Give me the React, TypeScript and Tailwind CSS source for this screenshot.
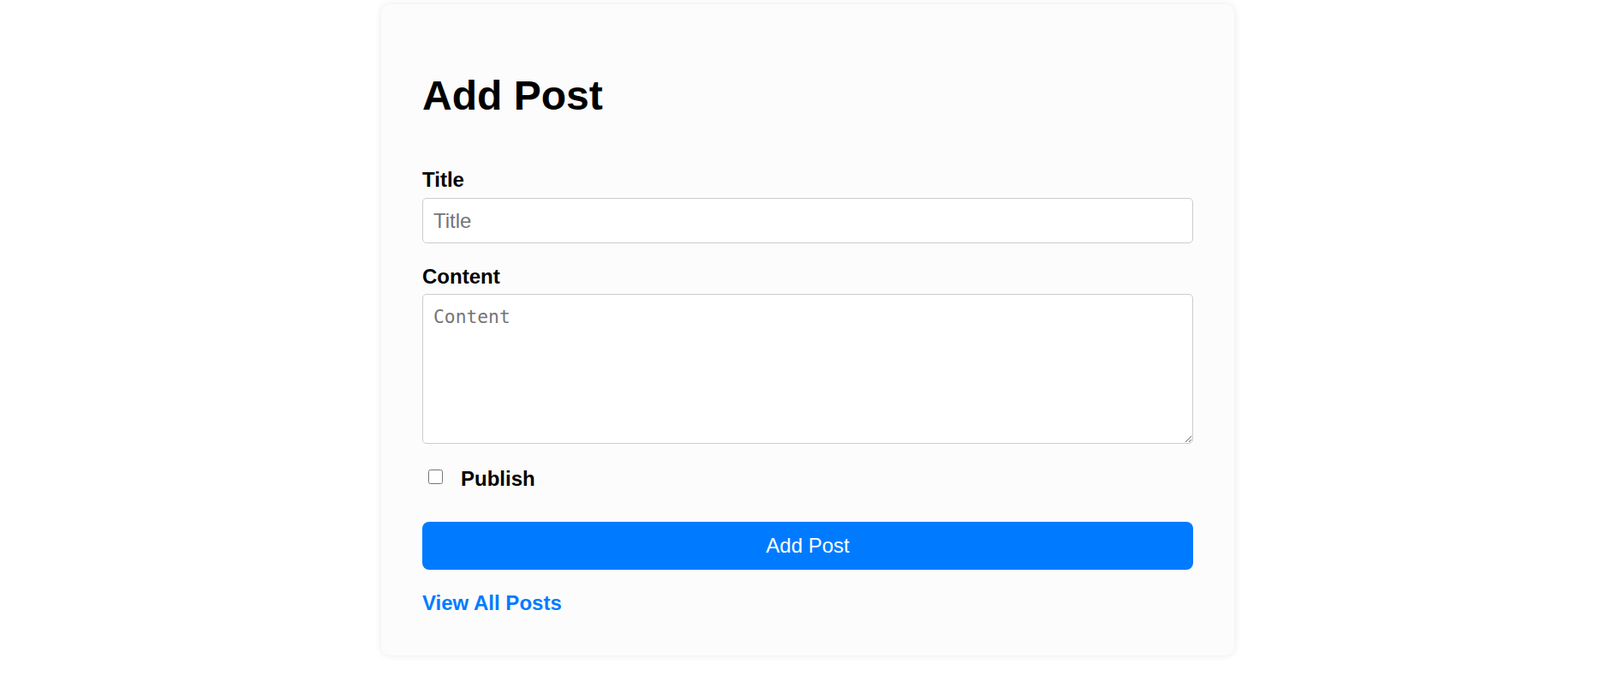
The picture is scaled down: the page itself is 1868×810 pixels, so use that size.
import { useState } from 'react';

const App = () => {
  const [title, setTitle] = useState('');
  const [content, setContent] = useState('');
  const [published, setPublished] = useState(false);

  return (
    <div className="min-h-screen bg-white flex justify-center pl-[18px] pt-[5px] font-['Liberation_Sans',Arial,sans-serif] text-black">
      <div className="w-[996px] self-start rounded-[10px] bg-[#fcfcfc] shadow-[0_0_8px_rgba(0,0,0,0.09)] px-12 pt-[79px] pb-[48px]">
        <h1 className="text-[48px] leading-[56px] font-bold mb-[57px]">Add Post</h1>

        <form onSubmit={(e) => e.preventDefault()}>
          <label htmlFor="title" className="block text-[24px] leading-[26px] font-bold mb-[8px]">
            Title
          </label>
          <input
            id="title"
            type="text"
            placeholder="Title"
            value={title}
            onChange={(e) => setTitle(e.target.value)}
            className="block w-full h-[53px] px-[12px] bg-white border border-[#cccccc] rounded-[5px] text-[24px] placeholder:text-[#757575] outline-none"
          />

          <label htmlFor="content" className="block mt-[26px] text-[24px] leading-[26px] font-bold mb-[7px]">
            Content
          </label>
          <textarea
            id="content"
            placeholder="Content"
            value={content}
            onChange={(e) => setContent(e.target.value)}
            className="block w-full h-[175px] px-[12px] pt-[13px] pb-[12px] bg-white border border-[#cccccc] rounded-[5px] font-['DejaVu_Sans_Mono',monospace] text-[21.3px] leading-[25px] placeholder:text-[#757575] outline-none"
          />

          <div className="flex items-start mt-[28px] h-[26px]">
            <input
              id="publish"
              type="checkbox"
              checked={published}
              onChange={(e) => setPublished(e.target.checked)}
              className="w-[17px] h-[17px] ml-[7px] mt-[2px]"
            />
            <label htmlFor="publish" className="ml-[21px] text-[24px] leading-[26px] font-bold">
              Publish
            </label>
          </div>

          <button
            type="submit"
            className="block w-full h-[56px] mt-[37px] rounded-[8px] bg-[#007bff] text-white text-[24px] leading-[28px]"
          >
            Add Post
          </button>
        </form>

        <a href="#" className="block w-fit mt-[26px] text-[24px] leading-[26px] font-bold text-[#007bff]">
          View All Posts
        </a>
      </div>
    </div>
  );
};

export default App;
